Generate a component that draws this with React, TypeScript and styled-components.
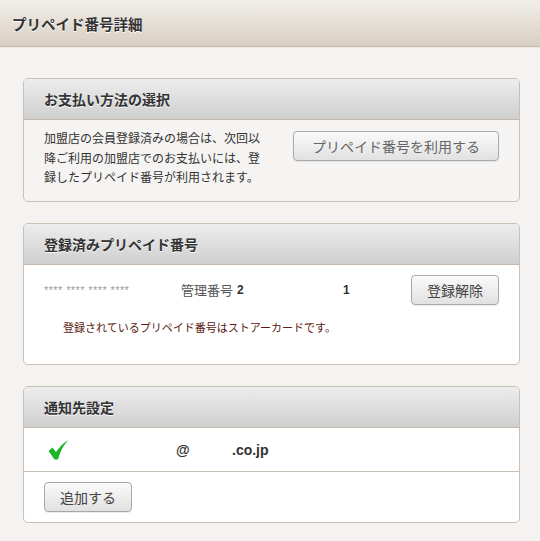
import React from 'react';
import styled, { createGlobalStyle } from 'styled-components';

const GlobalStyle = createGlobalStyle`
  html, body {
    margin: 0;
    padding: 0;
    background: #f4f3f1;
  }
  body {
    font-family: "Liberation Sans", "Noto Sans CJK JP", sans-serif;
    color: #333;
  }
`;

const TitleBar = styled.header`
  height: 47px;
  box-sizing: border-box;
  padding: 0 12px;
  display: flex;
  align-items: center;
  background: linear-gradient(to bottom, #f1eeea 0%, #d9cfc2 100%);
  border-bottom: 1px solid #c7bcae;
  box-shadow: 0 1px 0 #ece8e2;

  h1 {
    margin: 0;
    font-size: 14.5px;
    font-weight: bold;
    color: #333;
    text-shadow: 0 1px 0 #fff;
  }
`;

const Main = styled.main`
  padding: 31px 20px 20px 23px;
  display: flex;
  flex-direction: column;
  gap: 21px;
`;

const Card = styled.section<{ $plain?: boolean }>`
  border: 1px solid #c9c0b6;
  border-radius: 5px;
  overflow: hidden;
  background: ${p => (p.$plain ? '#f5f4f2' : '#fff')};
`;

const CardHead = styled.h2`
  margin: 0;
  height: 41px;
  box-sizing: border-box;
  padding: 0 20px;
  display: flex;
  align-items: center;
  font-size: 14px;
  font-weight: bold;
  color: #333;
  background: linear-gradient(to bottom, #ededed 0%, #cfcfcf 100%);
  border-bottom: 1px solid #c3b9ad;
  text-shadow: 0 1px 0 #fafafa;
`;

const PayBody = styled.div`
  height: 81px;
  box-sizing: border-box;
  padding: 10px 20px 0 20px;
  display: flex;
  justify-content: space-between;
  align-items: flex-start;
`;

const Note = styled.p`
  margin: 0;
  width: 226px;
  font-size: 12px;
  line-height: 19.5px;
  color: #333;
`;

const Button = styled.button<{ $w: number }>`
  width: ${p => p.$w}px;
  height: 30px;
  padding: 0;
  font-family: "Liberation Sans", "Noto Sans CJK JP", sans-serif;
  font-size: 14px;
  color: #444;
  background: linear-gradient(to bottom, #fafafa 0%, #e1e1e1 100%);
  border: 1px solid #a8a8a8;
  border-radius: 4px;
  box-shadow: 0 1px 1px rgba(0, 0, 0, 0.08);
`;

const PayButton = styled(Button)`
  margin-top: 1px;
  color: #666;
`;

const RegBody = styled.div`
  height: 99px;
  box-sizing: border-box;
  padding: 10px 20px 0 20px;
`;

const RegRow = styled.div`
  display: flex;
  align-items: center;
  height: 29px;
`;

const Masked = styled.span`
  width: 137px;
  font-size: 11px;
  letter-spacing: 0.4px;
  color: #9a9a9a;
`;

const Label = styled.span`
  width: 56px;
  font-size: 13px;
  color: #555;
`;

const Num = styled.span<{ $w: number }>`
  width: ${p => p.$w}px;
  font-size: 12px;
  font-weight: bold;
  color: #333;
`;

const Spacer = styled.span`
  flex: 1;
`;

const StoreNote = styled.p`
  margin: 15px 0 0 19px;
  font-size: 11px;
  color: #5a1a10;
`;

const MailRow = styled.div`
  height: 44px;
  box-sizing: border-box;
  padding: 0 24px;
  display: flex;
  align-items: center;
  border-bottom: 1px solid #c9c0b6;
  font-size: 14px;
  font-weight: bold;
`;

const CheckCell = styled.span`
  width: 128px;
  display: flex;
`;

const At = styled.span`
  width: 56px;
`;

const AddRow = styled.div`
  height: 50px;
  box-sizing: border-box;
  padding: 10px 20px;
`;

const Check = () => (
  <svg width="21" height="20" viewBox="0 0 21 20">
    <path d="M0.5 11 L4.5 7.5 L8 12 C11 7.5 15 3 20.5 0 C16 4.5 12.5 10.5 10 19.5 L6.5 19.5 Z" fill="#1fb52a" />
  </svg>
);

export default function App() {
  return (
    <>
      <GlobalStyle />
      <TitleBar>
        <h1>プリペイド番号詳細</h1>
      </TitleBar>
      <Main>
        <Card $plain>
          <CardHead>お支払い方法の選択</CardHead>
          <PayBody>
            <Note>
              加盟店の会員登録済みの場合は、次回以降ご利用の加盟店でのお支払いには、登録したプリペイド番号が利用されます。
            </Note>
            <PayButton $w={206}>プリペイド番号を利用する</PayButton>
          </PayBody>
        </Card>

        <Card>
          <CardHead>登録済みプリペイド番号</CardHead>
          <RegBody>
            <RegRow>
              <Masked>**** **** **** ****</Masked>
              <Label>管理番号</Label>
              <Num $w={106}>2</Num>
              <Num $w={20}>1</Num>
              <Spacer />
              <Button $w={88}>登録解除</Button>
            </RegRow>
            <StoreNote>登録されているプリペイド番号はストアーカードです。</StoreNote>
          </RegBody>
        </Card>

        <Card>
          <CardHead>通知先設定</CardHead>
          <MailRow>
            <CheckCell>
              <Check />
            </CheckCell>
            <At>@</At>
            <span>.co.jp</span>
          </MailRow>
          <AddRow>
            <Button $w={88}>追加する</Button>
          </AddRow>
        </Card>
      </Main>
    </>
  );
}
